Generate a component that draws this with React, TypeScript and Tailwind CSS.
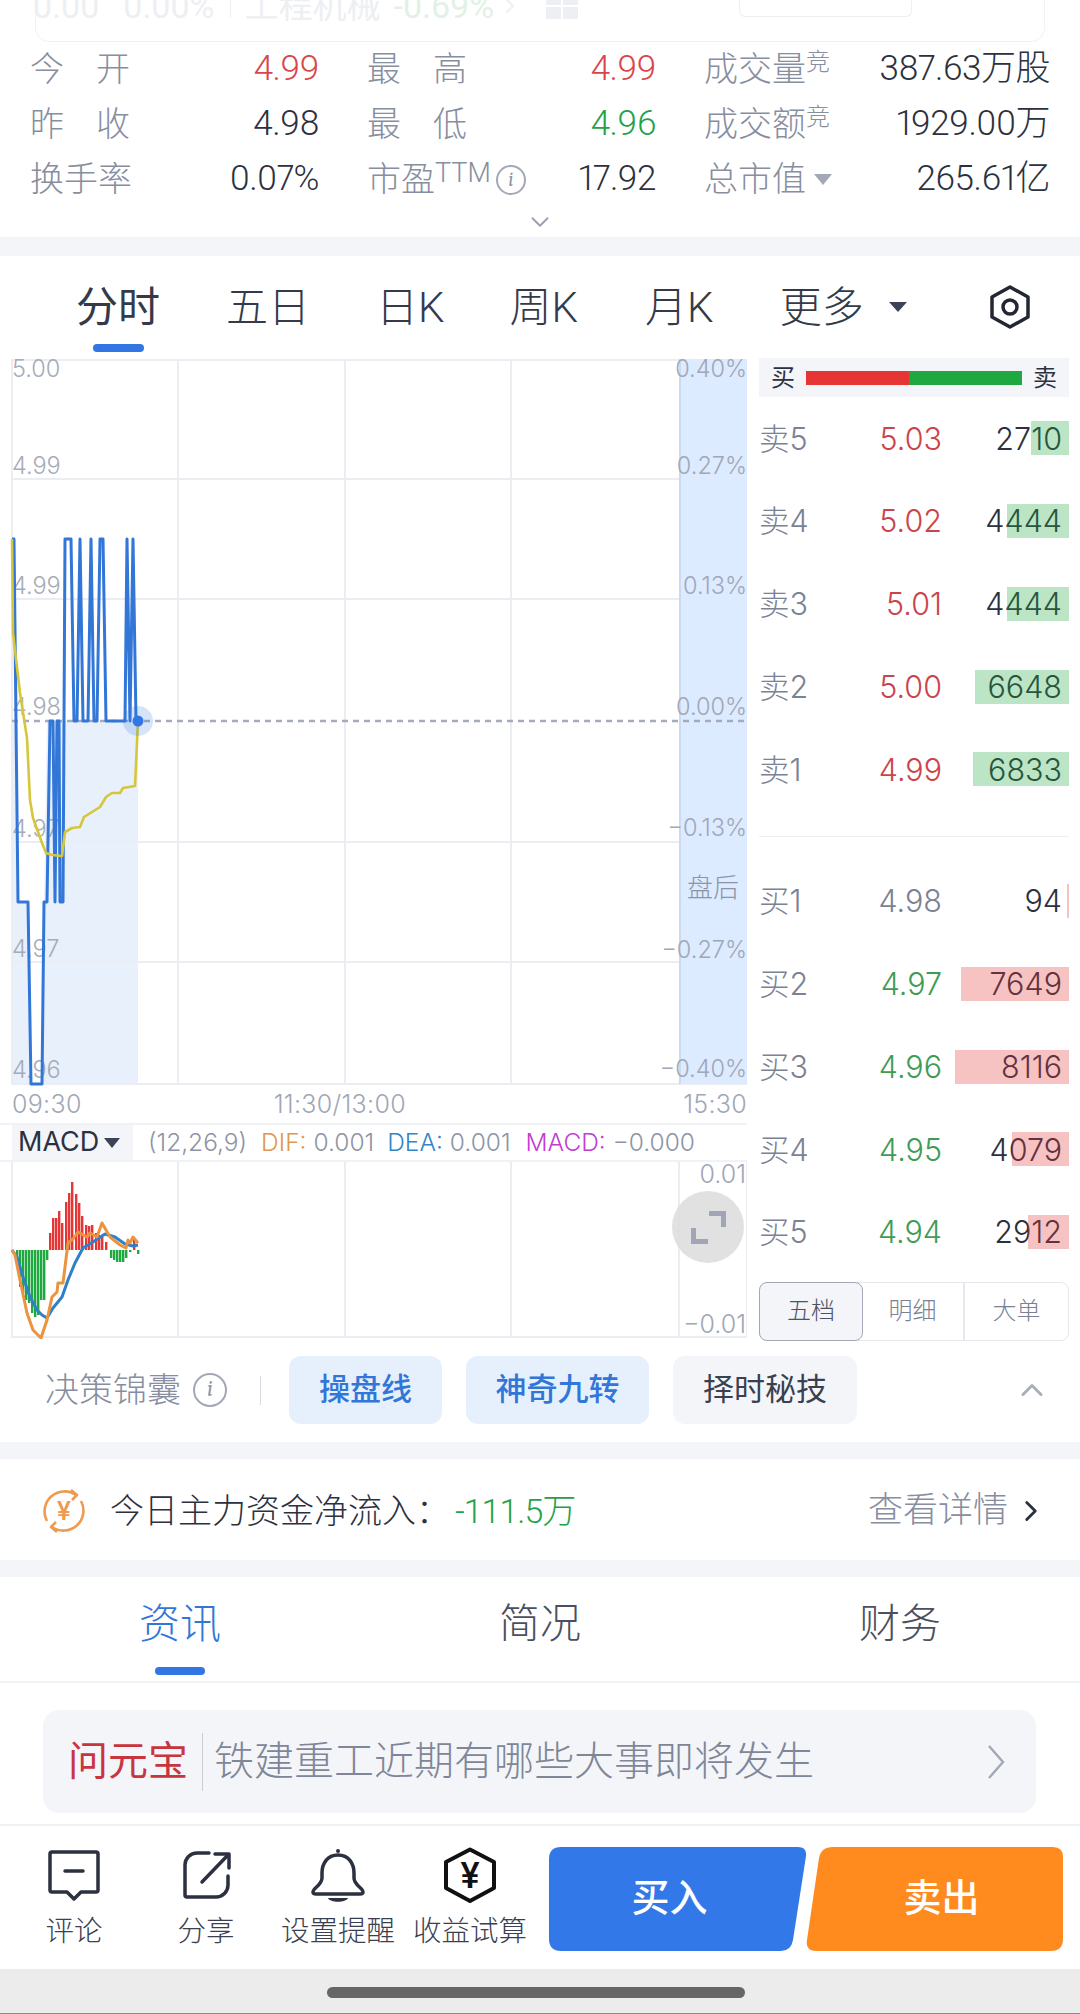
import { ChevronDown, ChevronRight, ChevronUp } from "lucide-react";

const cjk = "[font-family:Roboto,'Noto_Sans_CJK_SC',sans-serif]";

const bluePts =
  "12,539 14,539 18,902 28,902 31,1084 42,1084 44,902 47,902 50,721 53,721 55,902 57,721 59,721 60,902 63,902 65,539 71,539 74,721 77,721 80,539 83,721 88,721 91,539 94,721 97,721 100,539 103,539 106,721 125,721 127,539 130,721 133,539 136,721 138,721";
const yellowPts =
  "12,539 13,633 20,693 27,738 30,800 33,818 42,843 46,853 52,855 62,856 65,832 72,828 80,827 84,817 92,812 100,807 106,797 112,793 120,793 123,788 135,786 138,721";
const areaPts =
  "12,721 15,721 18,902 28,902 31,1084 42,1084 44,902 47,721 138,721 138,1084 12,1084";

const leftLabels = [
  ["5.00", 377],
  ["4.99", 474],
  ["4.99", 594],
  ["4.98", 715],
  ["4.97", 837],
  ["4.97", 957],
  ["4.96", 1078],
] as const;
const rightLabels = [
  ["0.40%", 377],
  ["0.27%", 474],
  ["0.13%", 594],
  ["0.00%", 715],
  ["−0.13%", 836],
  ["−0.27%", 958],
  ["−0.40%", 1077],
] as const;

// macd histogram: [x, height], positive goes up from zero line
const macdBars: [number, number][] = [
  [16, -8], [19, -37], [22, -43], [25, -50], [28, -53], [31, -63], [34, -67], [37, -65], [40, -50], [43, -50], [46, -10],
  [49, 17], [52, 32], [55, 32], [58, 39], [61, 27], [65, 48], [68, 57], [71, 68], [75, 56], [78, 47], [81, 34], [85, 25], [88, 24], [91, 25], [95, 17], [98, 15], [101, 13], [105, 8],
  [110, -8], [113, -10], [116, -12], [119, -12], [122, -12], [125, -8],
  [129, -2], [133, 10], [137, -4],
];
const macdBlue =
  "12,1250 17,1257 23,1277 30,1297 37,1310 42,1315 47,1318 53,1308 62,1297 68,1280 75,1263 83,1248 93,1242 105,1234 115,1237 125,1244 133,1246 138,1245";
const macdOrange =
  "12,1250 15,1255 20,1280 27,1313 33,1330 41,1338 47,1320 52,1297 57,1292 58,1283 63,1283 68,1243 73,1239 78,1232 87,1237 90,1233 97,1237 102,1223 110,1237 120,1245 126,1248 128,1240 130,1243 133,1237 138,1243";

type Level = { label: string; price: string; qty: string; color: string; bar: number };
const sells: Level[] = [
  { label: "卖5", price: "5.03", qty: "2710", color: "text-[#cc444a]", bar: 38 },
  { label: "卖4", price: "5.02", qty: "4444", color: "text-[#cc444a]", bar: 62 },
  { label: "卖3", price: "5.01", qty: "4444", color: "text-[#cc444a]", bar: 62 },
  { label: "卖2", price: "5.00", qty: "6648", color: "text-[#cc444a]", bar: 94 },
  { label: "卖1", price: "4.99", qty: "6833", color: "text-[#cc444a]", bar: 96 },
];
const buys: Level[] = [
  { label: "买1", price: "4.98", qty: "94", color: "text-[#7b8294]", bar: 2 },
  { label: "买2", price: "4.97", qty: "7649", color: "text-[#3f9c55]", bar: 108 },
  { label: "买3", price: "4.96", qty: "8116", color: "text-[#3f9c55]", bar: 114 },
  { label: "买4", price: "4.95", qty: "4079", color: "text-[#3f9c55]", bar: 57 },
  { label: "买5", price: "4.94", qty: "2912", color: "text-[#3f9c55]", bar: 41 },
];

function InfoIcon({ size }: { size: number }) {
  return (
    <span
      className="flex shrink-0 items-center justify-center rounded-full border-2 border-[#a2a8b6] font-serif text-[#8d94a5] italic"
      style={{ width: size, height: size, fontSize: size * 0.66 }}
    >
      i
    </span>
  );
}

function Stat({ label, value, color = "text-[#2c3140]", extra }: { label: React.ReactNode; value: string; color?: string; extra?: React.ReactNode }) {
  return (
    <div className="flex h-[55px] items-center justify-between">
      <div className="flex items-center text-[#878e9f]">
        {label}
        {extra}
      </div>
      <span className={`text-[35px] tracking-[-0.5px] proportional-nums ${color}`}>{value}</span>
    </div>
  );
}

function Spaced({ a, b }: { a: string; b: string }) {
  return (
    <span className="flex w-[100px] justify-between">
      <span>{a}</span>
      <span>{b}</span>
    </span>
  );
}

function Compete({ text }: { text: string }) {
  return (
    <span className="flex items-center">
      {text}
      <span className="-mt-[16px] text-[24px] leading-none">竞</span>
    </span>
  );
}

function Row({ level }: { level: Level }) {
  return (
    <div className="relative flex h-[82.75px] items-center [font-family:Inter,'Noto_Sans_CJK_SC',sans-serif] text-[30.5px] font-light">
      <span className="w-[80px] text-[#7b8294]">{level.label}</span>
      <span className={`w-[103px] text-right ${level.color}`}>{level.price}</span>
      <span className="flex-1 pr-[7px] text-right text-[#2c3140]">{level.qty}</span>
      <div
        className={`absolute right-0 h-[34px] ${level.label.startsWith("卖") ? "bg-[#1fa83f]/30" : "bg-[#e53535]/30"}`}
        style={{ width: level.bar }}
      />
    </div>
  );
}

function Band() {
  return <div className="h-[17px] bg-[#f3f5f9]" />;
}

function Tool({ label, children }: { label: string; children: React.ReactNode }) {
  return (
    <div className="flex w-[132px] flex-col items-center">
      <svg width="56" height="56" viewBox="0 0 56 56" fill="none" stroke="#2c3140" strokeWidth="3.5" strokeLinecap="round" strokeLinejoin="round">
        {children}
      </svg>
      <span className="mt-[9px] text-[28.5px] leading-[40px] font-light whitespace-nowrap text-[#3a4050]">{label}</span>
    </div>
  );
}

export default function App() {
  return (
    <div className={`h-[2014px] w-[1080px] overflow-hidden bg-white ${cjk}`}>
      {/* faded sticky header sliding under the page */}
      <div className="h-[42px] overflow-hidden">
        <div className="mx-[35px] flex h-[42px] items-start rounded-b-[14px] border border-t-0 border-[#f1f2f5] text-[34px] leading-[24px] text-[#edeff3]">
          <div className="-mt-[6px] flex h-[24px] items-center">
            <span className="ml-[-3px]">0.00</span>
            <span className="ml-[24px]">0.00%</span>
            <span className="ml-[15px] h-[24px] w-px bg-[#edeff3]" />
            <span className="ml-[14px] w-[136px]">工程机械</span>
            <span className="ml-[13px] text-[#e2f1e5]">-0.69%</span>
            <ChevronRight className="ml-[4px] h-[24px] w-[24px]" />
            <span className="ml-[24px] grid w-[32px] grid-cols-2 gap-[2px]">
              <span className="h-[12px] bg-[#edeff3]" />
              <span className="h-[12px] bg-[#edeff3]" />
              <span className="h-[12px] bg-[#edeff3]" />
              <span className="h-[12px] bg-[#edeff3]" />
            </span>
          </div>
          <div className="ml-[161px] h-[17px] w-[173px] rounded-b-[6px] border border-t-0 border-[#edeff3]" />
        </div>
      </div>

      {/* quote stats */}
      <div className="grid grid-cols-[289px_289px_346px] gap-x-[48px] pl-[30px] text-[34px] font-light">
        <Stat label={<Spaced a="今" b="开" />} value="4.99" color="text-[#d9464a]" />
        <Stat label={<Spaced a="最" b="高" />} value="4.99" color="text-[#d9464a]" />
        <Stat label={<Compete text="成交量" />} value="387.63万股" />
        <Stat label={<Spaced a="昨" b="收" />} value="4.98" />
        <Stat label={<Spaced a="最" b="低" />} value="4.96" color="text-[#24a148]" />
        <Stat label={<Compete text="成交额" />} value="1929.00万" />
        <Stat label="换手率" value="0.07%" />
        <Stat
          label={
            <span className="flex items-center">
              市盈<span className="-mt-[12px] text-[27px] leading-none">TTM</span>
            </span>
          }
          extra={<span className="ml-[5px]"><InfoIcon size={30} /></span>}
          value="17.92"
        />
        <Stat
          label="总市值"
          extra={<span className="ml-[8px] h-0 w-0 border-x-[9px] border-t-[11px] border-x-transparent border-t-[#a2a8b6]" />}
          value="265.61亿"
        />
      </div>
      <div className="flex h-[30px] items-center justify-center">
        <ChevronDown className="h-[30px] w-[30px] text-[#9aa0af]" strokeWidth={1.5} />
      </div>
      <div className="h-[19px] bg-[#f3f5f9]" />

      {/* period tabs */}
      <div className="relative h-[102px] text-[42px] text-[#343a4a]">
        <div className="flex h-[100px] items-center pt-[2px] font-light">
          <span className="ml-[76px] font-normal">分时</span>
          <span className="ml-[66px]">五日</span>
          <span className="ml-[66px]">日K</span>
          <span className="ml-[65px]">周K</span>
          <span className="ml-[67px]">月K</span>
          <span className="ml-[66px]">更多</span>
          <span className="ml-[25px] h-0 w-0 border-x-[9px] border-t-[10px] border-x-transparent border-t-[#3d4354]" />
          <svg className="ml-[82px]" width="42" height="46" viewBox="0 0 42 46" fill="none" stroke="#222733" strokeWidth="3.5" strokeLinejoin="round">
            <path d="M21 3 L39 13 V33 L21 43 L3 33 V13 Z" />
            <circle cx="21" cy="23" r="7" />
          </svg>
        </div>
        <div className="absolute top-[88px] left-[93px] h-[8px] w-[51px] rounded-full bg-[#3276e4]" />
      </div>

      {/* chart + order book */}
      <div className="flex h-[985px]">
        <div className="w-[747px] shrink-0">
          <svg width="747" height="727" viewBox="0 359 747 727" className="mt-px block [font-family:Inter,sans-serif] text-[23.5px] font-light">
            <polygon points={areaPts} fill="#e8f0fc" />
            <g stroke="#ebedf3" strokeWidth="2">
              <line x1="12" y1="360" x2="679" y2="360" />
              <line x1="12" y1="479" x2="679" y2="479" />
              <line x1="12" y1="599" x2="679" y2="599" />
              <line x1="12" y1="842" x2="679" y2="842" />
              <line x1="12" y1="962" x2="679" y2="962" />
              <line x1="12" y1="1084" x2="747" y2="1084" />
              <line x1="12" y1="359" x2="12" y2="1085" />
              <line x1="178" y1="359" x2="178" y2="1085" />
              <line x1="345" y1="359" x2="345" y2="1085" />
              <line x1="511" y1="359" x2="511" y2="1085" />
            </g>
            <rect x="679" y="359" width="68" height="725" fill="#dcebff" />
            <rect x="679" y="359" width="2" height="725" fill="#c9daf2" />
            {leftLabels.map(([t, y]) => (
              <text key={y} x="12" y={y} fill="#a5abb9">{t}</text>
            ))}
            {rightLabels.map(([t, y]) => (
              <text key={y} x="747" y={y} textAnchor="end" fill="#a0a7b6">{t}</text>
            ))}
            <text x="713" y="897" textAnchor="middle" className="[font-family:'Noto_Sans_CJK_SC',sans-serif] text-[26px]" fill="#8d94a5">盘后</text>
            <line x1="12" y1="721" x2="747" y2="721" stroke="#a6abbb" strokeWidth="2.5" strokeDasharray="6 5" />
            <polyline points={bluePts} fill="none" stroke="#3276d8" strokeWidth="3" strokeLinejoin="round" />
            <polyline points={yellowPts} fill="none" stroke="#d6c73a" strokeWidth="2.6" strokeLinejoin="round" />
            <circle cx="138" cy="721" r="15" fill="#3276e4" fillOpacity="0.2" />
            <circle cx="138" cy="721" r="5.5" fill="#3276e4" />
          </svg>

          <div className="flex h-[37px] items-center pt-[1px] pl-[12px] [font-family:Inter,sans-serif] text-[25px] font-light tracking-[0.3px] text-[#a0a7b6]">
            <span>09:30</span>
            <span className="ml-[192px]">11:30/13:00</span>
            <span className="ml-auto">15:30</span>
          </div>

          <div className="flex h-[39px] items-center border-y-2 border-[#f1f2f6] pl-[12px] [font-family:Inter,sans-serif] text-[24.5px] font-light whitespace-nowrap">
            <span className="flex h-full w-[121px] items-center bg-[#f3f5f9] pl-[6px] text-[27px] font-normal text-[#2c3140]">
              MACD
              <span className="ml-[5px] h-0 w-0 border-x-[8px] border-t-[10px] border-x-transparent border-t-[#3d4354]" />
            </span>
            <span className="ml-[15px] text-[#8d94a5]">(12,26,9)</span>
            <span className="ml-[14px] text-[#e0984c]">DIF:</span>
            <span className="ml-[7px] text-[#8d94a5]">0.001</span>
            <span className="ml-[13px] text-[#2f86c9]">DEA:</span>
            <span className="ml-[7px] text-[#8d94a5]">0.001</span>
            <span className="ml-[15px] text-[#c23dd0]">MACD:</span>
            <span className="ml-[7px] text-[#8d94a5]">−0.000</span>
          </div>

          <div className="relative">
            <svg width="747" height="177" viewBox="0 1162 747 177" className="block [font-family:Inter,sans-serif] text-[25px] font-light">
              <g stroke="#ebedf3" strokeWidth="2">
                <line x1="12" y1="1162" x2="12" y2="1338" />
                <line x1="178" y1="1162" x2="178" y2="1338" />
                <line x1="345" y1="1162" x2="345" y2="1338" />
                <line x1="511" y1="1162" x2="511" y2="1338" />
                <line x1="679" y1="1162" x2="679" y2="1338" />
                <line x1="747" y1="1162" x2="747" y2="1338" />
                <line x1="12" y1="1337" x2="747" y2="1337" />
              </g>
              {macdBars.map(([x, h]) => (
                <rect
                  key={x}
                  x={x}
                  y={h > 0 ? 1250 - h : 1250}
                  width="2.4"
                  height={Math.abs(h)}
                  fill={h > 0 ? "#e53535" : "#1fa83f"}
                />
              ))}
              <polyline points={macdBlue} fill="none" stroke="#2f7fc9" strokeWidth="3" strokeLinejoin="round" />
              <polyline points={macdOrange} fill="none" stroke="#ea9440" strokeWidth="3" strokeLinejoin="round" />
              <text x="746" y="1183" textAnchor="end" fill="#a0a7b6">0.01</text>
              <text x="746" y="1333" textAnchor="end" fill="#a0a7b6">−0.01</text>
            </svg>
            <div className="absolute top-[29px] left-[672px] h-[72px] w-[72px] rounded-full bg-[#dcdcdc]/85">
              <svg width="72" height="72" viewBox="0 0 72 72" fill="none" stroke="#a0a6b6" strokeWidth="5">
                <path d="M37 22.5 H51.5 V36" />
                <path d="M21.5 37 V50.5 H36" />
              </svg>
            </div>
          </div>
        </div>

        <div className="ml-[12px] w-[310px]">
          <div className="flex h-[39px] items-center bg-[#f3f5f9] px-[12px] text-[24px] text-[#2c3140]">
            <span>买</span>
            <div className="mx-[11px] flex h-[14px] flex-1">
              <div className="w-[103px] bg-[#e53535]" />
              <div className="flex-1 bg-[#1fa83f]" />
            </div>
            <span>卖</span>
          </div>
          {sells.map((l) => (
            <Row key={l.label} level={l} />
          ))}
          <div className="mt-[25px] h-px bg-[#eceef2]" />
          <div className="mt-[23px]">
            {buys.map((l) => (
              <Row key={l.label} level={l} />
            ))}
          </div>
          <div className="mt-[8px] flex h-[59px] rounded-[8px] border border-[#e6e8ee] text-[24px] font-light text-[#7b8294]">
            <span className="-m-px flex w-[104px] items-center justify-center rounded-[8px] border border-[#a2a8b6] bg-[#f3f5f9] text-[#4c5366]">五档</span>
            <span className="flex w-[103px] items-center justify-center border-r-2 border-[#e6e8ee]">明细</span>
            <span className="flex flex-1 items-center justify-center">大单</span>
          </div>
        </div>
      </div>

      {/* decision kit */}
      <div className="flex h-[99px] items-start">
        <div className="mt-[13px] flex h-[68px] items-center">
          <span className="ml-[45px] text-[34px] font-light text-[#878e9f]">决策锦囊</span>
          <span className="ml-[12px]"><InfoIcon size={34} /></span>
          <span className="ml-[33px] h-[29px] w-px bg-[#d6d9e0]" />
          <span className="ml-[28px] flex h-[68px] w-[153px] items-center justify-center rounded-[12px] bg-[#e6f0fd] text-[31px] font-medium text-[#3276d8]">操盘线</span>
          <span className="ml-[24px] flex h-[68px] w-[183px] items-center justify-center rounded-[12px] bg-[#e6f0fd] text-[31px] font-medium text-[#3276d8]">神奇九转</span>
          <span className="ml-[24px] flex h-[68px] w-[184px] items-center justify-center rounded-[12px] bg-[#f3f5f9] text-[31px] text-[#3a4050]">择时秘技</span>
          <ChevronUp className="ml-[157px] h-[36px] w-[36px] text-[#a8aebb]" strokeWidth={2} />
        </div>
      </div>
      <Band />

      {/* capital flow */}
      <div className="flex h-[101px] items-center pt-[3px] text-[34px] font-light">
        <svg className="ml-[40px]" width="48" height="48" viewBox="0 0 48 48" fill="none" stroke="#ee9a50" strokeWidth="2.6">
          <path d="M36 8 A20 20 0 0 0 7 34" />
          <path d="M12 40 A20 20 0 0 0 41 14" />
          <path d="M31 3 L37 8 L32 13" strokeLinejoin="round" />
          <path d="M17 45 L11 40 L16 35" strokeLinejoin="round" />
          <text x="24" y="33" textAnchor="middle" fontSize="26" fill="#ee9a50" stroke="none" fontWeight="500">¥</text>
        </svg>
        <span className="ml-[22px] text-[#2c3140]">今日主力资金净流入：</span>
        <span className="ml-[5px] tracking-[-1px] text-[#24a148]">-111.5万</span>
        <span className="ml-auto text-[35px] text-[#878e9f]">查看详情</span>
        <ChevronRight className="mr-[32px] ml-[6px] h-[34px] w-[34px] text-[#2c3140]" strokeWidth={2} />
      </div>
      <Band />

      {/* bottom tabs */}
      <div className="relative grid h-[106px] grid-cols-3 border-b-2 border-[#f1f2f5] text-[41px] font-light">
        <span className="flex h-[96px] items-center justify-center text-[#3276d8]">资讯</span>
        <span className="flex h-[96px] items-center justify-center text-[#4a5060]">简况</span>
        <span className="flex h-[96px] items-center justify-center text-[#4a5060]">财务</span>
        <div className="absolute top-[90px] left-[155px] h-[8px] w-[50px] rounded-full bg-[#3276e4]" />
      </div>

      {/* ask box */}
      <div className="flex h-[143px] items-start border-b-2 border-[#f0f1f4]">
        <div className="mt-[27px] ml-[43px] flex h-[103px] w-[993px] items-center rounded-[16px] bg-[#f3f5f9]">
          <span className="ml-[25px] text-[40px] text-[#c9353f]">问元宝</span>
          <span className="ml-[14px] h-[58px] w-px bg-[#c8ccd5]" />
          <span className="ml-[11px] text-[40px] font-light text-[#7f8698]">铁建重工近期有哪些大事即将发生</span>
          <svg className="mr-[31px] ml-auto" width="18" height="36" viewBox="0 0 18 36" fill="none" stroke="#a2a8b6" strokeWidth="2.4">
            <path d="M2 2 L16 18 L2 34" />
          </svg>
        </div>
      </div>

      {/* action bar */}
      <div className="flex h-[143px] items-start pl-[8px]">
        <div className="mt-[21px] flex">
          <Tool label="评论">
            <path d="M6 5 H50 A2 2 0 0 1 52 7 V43 A2 2 0 0 1 50 45 H35 L28 52 L21 45 H6 A2 2 0 0 1 4 43 V7 A2 2 0 0 1 6 5 Z" />
            <path d="M19 24 H37" />
          </Tool>
          <Tool label="分享">
            <path d="M31 6 H19 A12 12 0 0 0 7 18 V48 A2 2 0 0 0 9 50 H38 A12 12 0 0 0 50 38 V29" />
            <path d="M24 35 L50 8" />
            <path d="M37 7 H51 V21" />
          </Tool>
          <Tool label="设置提醒">
            <path d="M28 8 C17 8 12 17 12 26 V31 C12 38 3 41 3 45 C3 46 4 47 6 47 H50 C52 47 53 46 53 45 C53 41 44 38 44 31 V26 C44 17 39 8 28 8 Z" />
            <circle cx="28" cy="4" r="2" fill="#2c3140" stroke="none" />
            <path d="M18 51 H38 C36 56 20 56 18 51 Z" fill="#2c3140" stroke="none" />
          </Tool>
          <Tool label="收益试算">
            <path d="M28 2.5 L52 15 V41 L28 54 L4 41 V15 Z" stroke="#111" strokeWidth="4" />
            <text x="28" y="41" textAnchor="middle" fontSize="36" fontWeight="500" fill="#111" stroke="none">¥</text>
          </Tool>
        </div>
        <div className="relative mt-[21px] ml-[13px] h-[104px] w-[514px] text-[38px] font-medium text-white">
          <svg className="absolute inset-0" width="514" height="104" viewBox="0 0 514 104">
            <path d="M12 0 H249 Q258 0 257 9 L244 93 Q242 104 232 104 H12 Q0 104 0 92 V12 Q0 0 12 0 Z" fill="#3278e8" />
            <path d="M284 0 H504 Q514 0 514 10 V92 Q514 104 502 104 H267 Q256 104 258 93 L270 11 Q272 0 284 0 Z" fill="#ff8a1e" />
          </svg>
          <div className="relative grid h-full grid-cols-2 pb-[2px]">
            <span className="flex items-center justify-center pr-[16px]">买入</span>
            <span className="flex items-center justify-center pl-[14px]">卖出</span>
          </div>
        </div>
      </div>

      {/* system nav */}
      <div className="flex h-[45px] items-start justify-center border-b border-[#8a8a8a] bg-[#ececec] pt-[18px] pr-[8px]">
        <div className="h-[11px] w-[418px] rounded-full bg-[#666666]" />
      </div>
    </div>
  );
}
